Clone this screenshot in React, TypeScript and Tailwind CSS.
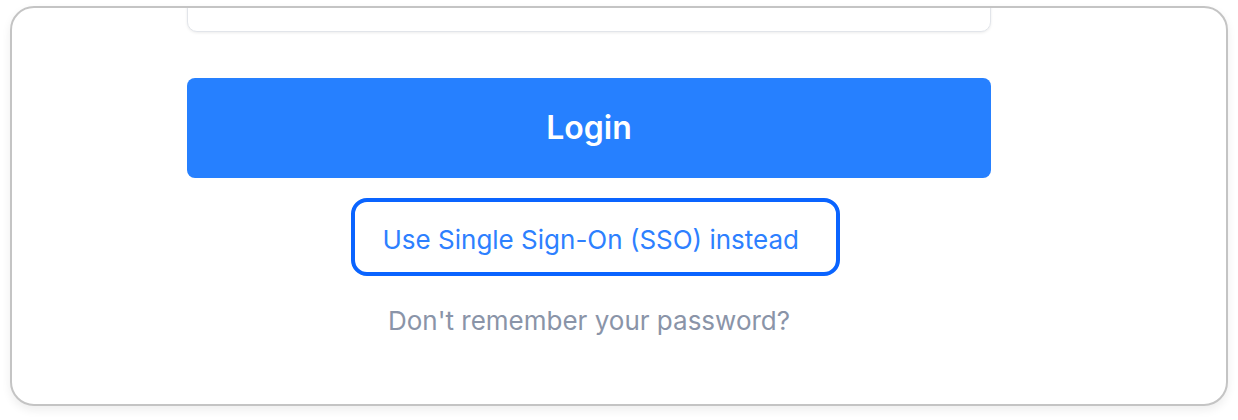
const App = () => {
  return (
    <div className="w-[1238px] h-[420px] bg-white pt-[6px] pl-[10px]" style={{ fontFamily: "Inter, 'Noto Sans', sans-serif" }}>
      <div className="w-[1218px] h-[400px] rounded-[24px] border-2 border-[#c4c4c4] bg-white overflow-hidden shadow-[0_4px_10px_rgba(0,0,0,0.07)]">
        <div className="w-[804px] ml-[175px] flex flex-col items-center">
          <div className="w-full h-[60px] -mt-[36px] rounded-[10px] border border-[#e2e5ea] bg-white shadow-[0_1px_3px_rgba(0,0,0,0.08)]" />
          <button className="mt-[46px] w-full h-[100px] rounded-[8px] bg-[#2680ff] text-white text-[32px] font-semibold">
            Login
          </button>
          <a
            href="#"
            className="mt-[20px] ml-[12px] h-[78px] w-[489px] flex items-center pl-[28px] pt-[4px] rounded-[16px] border-[4px] border-[#0a64ff] text-[#2d80ff] text-[26px]"
          >
            Use Single Sign-On (SSO) instead
          </a>
          <a href="#" className="mt-[25px] text-[26px] text-[#8a94a8]">
            Don't remember your password?
          </a>
        </div>
      </div>
    </div>
  );
};

export default App;
